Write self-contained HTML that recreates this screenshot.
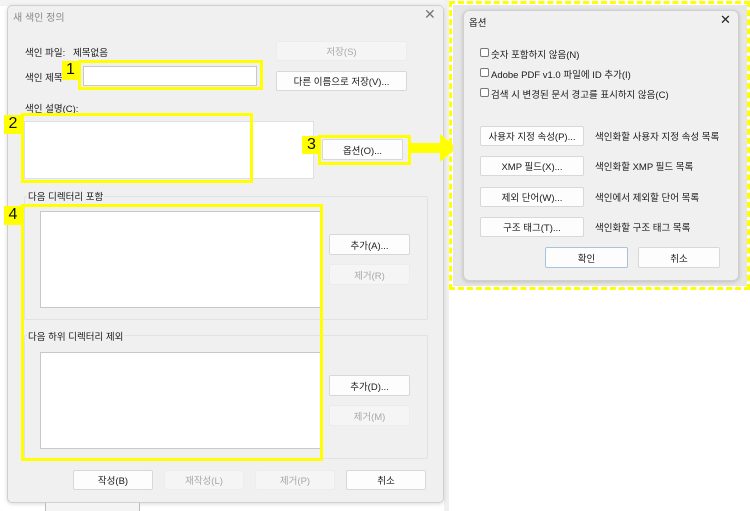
<!DOCTYPE html>
<html><head><meta charset="utf-8"><style>
*{box-sizing:border-box;margin:0;padding:0}
body{width:750px;height:511px;background:#fff;position:relative;overflow:hidden;font-family:"Liberation Sans","Noto Sans CJK KR",sans-serif;font-size:9.5px;color:#1a1a1a}
.a{position:absolute}
.btn{position:absolute;background:#fdfdfd;border:1px solid #d8d8d8;border-radius:2px;text-align:center;font-size:9.5px;display:flex;align-items:center;justify-content:center}
.dis{background:#f5f5f5;border-color:#ececec;color:#a8a8a8}
.box{position:absolute;background:#fff;border:1px solid #c8c8c8}
.yel{position:absolute;border:3px solid #ffff00}
.num{position:absolute;background:#ffff00;font-size:16px;line-height:18px;text-align:center;color:#111}
.grp{position:absolute;border:1px solid #e2e2e2;border-radius:2px}
.cb{position:absolute;width:9px;height:9px;border:1px solid #777;border-radius:2px;background:#fff}
</style></head><body>
<!-- main dialog -->
<div class="a" style="left:0;top:0;width:446px;height:6px;background:#f4f4f4"></div>
<div class="a" style="left:444px;top:0;width:5px;height:511px;background:#f0f0f0"></div>
<div class="a" style="left:7px;top:5px;width:437px;height:498px;background:#f0f0f0;border:1px solid #d0d0d0;border-radius:5px;box-shadow:0 1px 4px rgba(0,0,0,.15)"></div>
<div class="a" style="left:13px;top:9px;color:#888;font-size:10px">새 색인 정의</div>
<div class="a" style="left:424px;top:6px;color:#777;font-size:14px">✕</div>

<div class="a" style="left:25px;top:45px">색인 파일:</div>
<div class="a" style="left:73px;top:45px">제목없음</div>
<div class="btn dis" style="left:276px;top:41px;width:131px;height:20px">저장(S)</div>
<div class="a" style="left:25px;top:70px">색인 제목</div>
<div class="yel" style="left:78px;top:60px;width:185px;height:30px"></div>
<div class="box" style="left:83px;top:66px;width:174px;height:20px"></div>
<div class="num" style="left:62px;top:61px;width:17px;height:19px">1</div>
<div class="btn" style="left:276px;top:71px;width:131px;height:20px">다른 이름으로 저장(V)...</div>

<div class="a" style="left:25px;top:101px">색인 설명(C):</div>
<div class="box" style="left:24px;top:121px;width:290px;height:58px;border-color:#e0e0e0"></div>
<div class="yel" style="left:21px;top:113px;width:232px;height:70px"></div>
<div class="num" style="left:4px;top:115px;width:18px;height:19px">2</div>

<div class="yel" style="left:318px;top:135px;width:93px;height:30px"></div>
<div class="num" style="left:302px;top:136px;width:19px;height:18px">3</div>
<div class="btn" style="left:322px;top:139px;width:81px;height:21px">옵션(O)...</div>
<svg class="a" style="left:410px;top:133px" width="50" height="32"><polygon points="0,10 30,10 30,1 47,15 30,29 30,20 0,20" fill="#ffff00"/></svg>

<div class="grp" style="left:24px;top:196px;width:404px;height:124px"></div>
<div class="a" style="left:27px;top:189px;background:#f0f0f0;padding:0 1px">다음 디렉터리 포함</div>
<div class="box" style="left:40px;top:211px;width:281px;height:97px"></div>
<div class="btn" style="left:329px;top:234px;width:81px;height:21px">추가(A)...</div>
<div class="btn dis" style="left:329px;top:264px;width:81px;height:21px">제거(R)</div>

<div class="grp" style="left:24px;top:335px;width:404px;height:124px"></div>
<div class="a" style="left:27px;top:329px;background:#f0f0f0;padding:0 1px">다음 하위 디렉터리 제외</div>
<div class="box" style="left:40px;top:352px;width:281px;height:97px"></div>
<div class="btn" style="left:329px;top:375px;width:81px;height:21px">추가(D)...</div>
<div class="btn dis" style="left:329px;top:405px;width:81px;height:21px">제거(M)</div>

<div class="yel" style="left:21px;top:204px;width:302px;height:257px"></div>
<div class="num" style="left:4px;top:206px;width:18px;height:19px">4</div>

<div class="btn" style="left:73px;top:470px;width:80px;height:20px">작성(B)</div>
<div class="btn dis" style="left:164px;top:470px;width:80px;height:20px">재작성(L)</div>
<div class="btn dis" style="left:255px;top:470px;width:80px;height:20px">제거(P)</div>
<div class="btn" style="left:346px;top:470px;width:80px;height:20px">취소</div>
<div class="a" style="left:45px;top:503px;width:95px;height:8px;border-left:1px solid #bbb;border-right:1px solid #bbb;background:#f4f4f4"></div>

<!-- right side: options -->
<div class="a" style="left:453px;top:5px;width:294px;height:281px;background:#e6e6e6"></div>
<div class="a" style="left:449px;top:1px;width:301px;height:289px;border:3px dashed #ffff00"></div>
<div class="a" style="left:463px;top:10px;width:276px;height:271px;background:#f0f0f0;border:1px solid #cfcfcf;border-radius:6px;box-shadow:0 1px 4px rgba(0,0,0,.18)"></div>
<div class="a" style="left:469px;top:15px">옵션</div>
<div class="a" style="left:720px;top:12px;font-size:13px;color:#222">✕</div>
<div class="cb" style="left:480px;top:48px"></div><div class="a" style="left:491px;top:47px">숫자 포함하지 않음(N)</div>
<div class="cb" style="left:480px;top:68px"></div><div class="a" style="left:491px;top:67px">Adobe PDF v1.0 파일에 ID 추가(I)</div>
<div class="cb" style="left:480px;top:88px"></div><div class="a" style="left:491px;top:87px">검색 시 변경된 문서 경고를 표시하지 않음(C)</div>
<div class="btn" style="left:480px;top:126px;width:104px;height:20px">사용자 지정 속성(P)...</div>
<div class="a" style="left:595px;top:129px">색인화할 사용자 지정 속성 목록</div>
<div class="btn" style="left:480px;top:156px;width:104px;height:20px">XMP 필드(X)...</div>
<div class="a" style="left:595px;top:159px">색인화할 XMP 필드 목록</div>
<div class="btn" style="left:480px;top:187px;width:104px;height:20px">제외 단어(W)...</div>
<div class="a" style="left:595px;top:190px">색인에서 제외할 단어 목록</div>
<div class="btn" style="left:480px;top:217px;width:104px;height:20px">구조 태그(T)...</div>
<div class="a" style="left:595px;top:220px">색인화할 구조 태그 목록</div>
<div class="btn" style="left:545px;top:247px;width:83px;height:21px;border-color:#a9c3df">확인</div>
<div class="btn" style="left:638px;top:247px;width:82px;height:21px">취소</div>
</body></html>
